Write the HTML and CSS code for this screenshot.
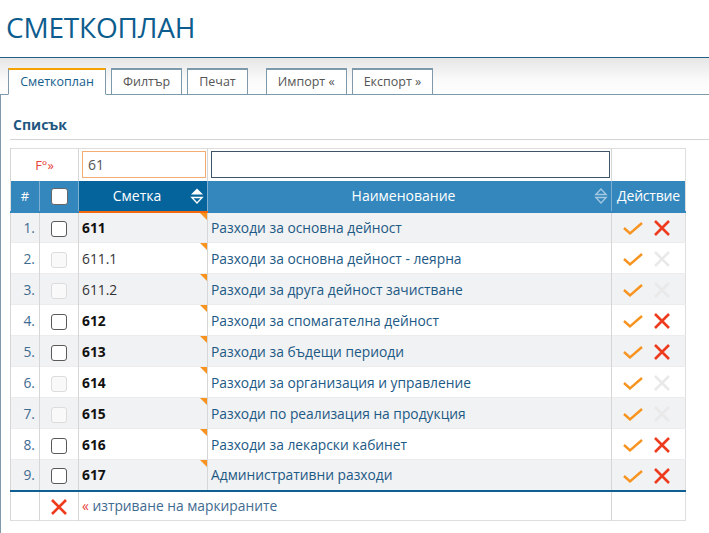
FILE: index.html
```html
<!DOCTYPE html>
<html lang="bg">
<head>
<meta charset="utf-8">
<title>Сметкоплан</title>
<link rel="stylesheet" href="styles.css">
</head>
<body>
<h1 class="title">СМЕТКОПЛАН</h1>
<div class="tabbar">
  <div class="tab active">Сметкоплан</div>
  <div class="tab">Филтър</div>
  <div class="tab">Печат</div>
  <div class="tab tab-sep">Импорт «</div>
  <div class="tab">Експорт »</div>
</div>
<div class="panel">
  <div class="section-title">Списък</div>
  <table class="grid">
    <colgroup>
      <col class="c-num"><col class="c-chk"><col class="c-acc"><col class="c-name"><col class="c-act">
    </colgroup>
    <thead>
      <tr class="filter-row">
        <td colspan="2" class="f-label">F°»</td>
        <td class="f-cell"><div class="f-input f-orange">61</div></td>
        <td class="f-cell"><div class="f-input f-dark"></div></td>
        <td></td>
      </tr>
      <tr class="head-row">
        <th class="h-num">#</th>
        <th class="h-chk"><span class="cb cb-head"></span></th>
        <th class="h-acc sorted">Сметка<svg class="sort" viewBox="0 0 14 18" width="14" height="18"><path d="M1 7.5 L7 1.5 L13 7.5 Z" fill="#fff"/><path d="M1.8 10.5 L12.2 10.5 L7 16 Z" fill="none" stroke="#fff" stroke-width="1.3"/></svg></th>
        <th class="h-name">Наименование<svg class="sort dim" viewBox="0 0 14 18" width="14" height="18"><path d="M1.8 7.5 L7 2 L12.2 7.5 Z" fill="none" stroke="#fff" stroke-width="1.3"/><path d="M1.8 10.5 L12.2 10.5 L7 16 Z" fill="none" stroke="#fff" stroke-width="1.3"/></svg></th>
        <th class="h-act">Действие</th>
      </tr>
    </thead>
    <tbody>
      <tr><td class="num">1.</td><td class="chk"><span class="cb"></span></td><td class="acc b">611<i class="corner"></i></td><td class="name">Разходи за основна дейност</td><td class="act"><svg class="ok" viewBox="0 0 22 16" width="22" height="16"><path d="M2 8 L8 13.5 L20 3" fill="none" stroke="#f7931e" stroke-width="2.4"/></svg><svg class="del" viewBox="0 0 18 18" width="18" height="18"><path d="M2 2 L16 16 M16 2 L2 16" stroke="#ee3b1d" stroke-width="2.6"/></svg></td></tr>
      <tr><td class="num">2.</td><td class="chk"><span class="cb off"></span></td><td class="acc">611.1<i class="corner"></i></td><td class="name">Разходи за основна дейност - леярна</td><td class="act"><svg class="ok" viewBox="0 0 22 16" width="22" height="16"><path d="M2 8 L8 13.5 L20 3" fill="none" stroke="#f7931e" stroke-width="2.4"/></svg><svg class="del" viewBox="0 0 18 18" width="18" height="18"><path d="M2 2 L16 16 M16 2 L2 16" stroke="#e9e9e9" stroke-width="2.6"/></svg></td></tr>
      <tr><td class="num">3.</td><td class="chk"><span class="cb off"></span></td><td class="acc">611.2<i class="corner"></i></td><td class="name">Разходи за друга дейност зачистване</td><td class="act"><svg class="ok" viewBox="0 0 22 16" width="22" height="16"><path d="M2 8 L8 13.5 L20 3" fill="none" stroke="#f7931e" stroke-width="2.4"/></svg><svg class="del" viewBox="0 0 18 18" width="18" height="18"><path d="M2 2 L16 16 M16 2 L2 16" stroke="#e9e9e9" stroke-width="2.6"/></svg></td></tr>
      <tr><td class="num">4.</td><td class="chk"><span class="cb"></span></td><td class="acc b">612<i class="corner"></i></td><td class="name">Разходи за спомагателна дейност</td><td class="act"><svg class="ok" viewBox="0 0 22 16" width="22" height="16"><path d="M2 8 L8 13.5 L20 3" fill="none" stroke="#f7931e" stroke-width="2.4"/></svg><svg class="del" viewBox="0 0 18 18" width="18" height="18"><path d="M2 2 L16 16 M16 2 L2 16" stroke="#ee3b1d" stroke-width="2.6"/></svg></td></tr>
      <tr><td class="num">5.</td><td class="chk"><span class="cb"></span></td><td class="acc b">613<i class="corner"></i></td><td class="name">Разходи за бъдещи периоди</td><td class="act"><svg class="ok" viewBox="0 0 22 16" width="22" height="16"><path d="M2 8 L8 13.5 L20 3" fill="none" stroke="#f7931e" stroke-width="2.4"/></svg><svg class="del" viewBox="0 0 18 18" width="18" height="18"><path d="M2 2 L16 16 M16 2 L2 16" stroke="#ee3b1d" stroke-width="2.6"/></svg></td></tr>
      <tr><td class="num">6.</td><td class="chk"><span class="cb off"></span></td><td class="acc b">614<i class="corner"></i></td><td class="name">Разходи за организация и управление</td><td class="act"><svg class="ok" viewBox="0 0 22 16" width="22" height="16"><path d="M2 8 L8 13.5 L20 3" fill="none" stroke="#f7931e" stroke-width="2.4"/></svg><svg class="del" viewBox="0 0 18 18" width="18" height="18"><path d="M2 2 L16 16 M16 2 L2 16" stroke="#e9e9e9" stroke-width="2.6"/></svg></td></tr>
      <tr><td class="num">7.</td><td class="chk"><span class="cb off"></span></td><td class="acc b">615<i class="corner"></i></td><td class="name">Разходи по реализация на продукция</td><td class="act"><svg class="ok" viewBox="0 0 22 16" width="22" height="16"><path d="M2 8 L8 13.5 L20 3" fill="none" stroke="#f7931e" stroke-width="2.4"/></svg><svg class="del" viewBox="0 0 18 18" width="18" height="18"><path d="M2 2 L16 16 M16 2 L2 16" stroke="#e9e9e9" stroke-width="2.6"/></svg></td></tr>
      <tr><td class="num">8.</td><td class="chk"><span class="cb"></span></td><td class="acc b">616<i class="corner"></i></td><td class="name">Разходи за лекарски кабинет</td><td class="act"><svg class="ok" viewBox="0 0 22 16" width="22" height="16"><path d="M2 8 L8 13.5 L20 3" fill="none" stroke="#f7931e" stroke-width="2.4"/></svg><svg class="del" viewBox="0 0 18 18" width="18" height="18"><path d="M2 2 L16 16 M16 2 L2 16" stroke="#ee3b1d" stroke-width="2.6"/></svg></td></tr>
      <tr><td class="num">9.</td><td class="chk"><span class="cb"></span></td><td class="acc b">617<i class="corner"></i></td><td class="name">Административни разходи</td><td class="act"><svg class="ok" viewBox="0 0 22 16" width="22" height="16"><path d="M2 8 L8 13.5 L20 3" fill="none" stroke="#f7931e" stroke-width="2.4"/></svg><svg class="del" viewBox="0 0 18 18" width="18" height="18"><path d="M2 2 L16 16 M16 2 L2 16" stroke="#ee3b1d" stroke-width="2.6"/></svg></td></tr>
    </tbody>
    <tfoot>
      <tr class="foot-row">
        <td></td>
        <td class="chk"><svg class="del" viewBox="0 0 18 18" width="18" height="18"><path d="M2 2 L16 16 M16 2 L2 16" stroke="#ee3b1d" stroke-width="2.6"/></svg></td>
        <td colspan="2" class="foot-text"><span class="laquo">«</span> изтриване на маркираните</td>
        <td></td>
      </tr>
    </tfoot>
  </table>
</div>
</body>
</html>
```

FILE: styles.css
```css
* { box-sizing: border-box; }
html, body { margin: 0; padding: 0; background: #fff; }
body {
  font-family: "Open Sans", "DejaVu Sans", sans-serif;
  font-size: 14px;
  color: #333;
  width: 709px;
  height: 533px;
  overflow: hidden;
}
.title {
  margin: 0;
  height: 57px;
  padding: 7px 0 0 6px;
  font-size: 28px;
  font-weight: normal;
  color: #0d5c8e;
  line-height: 40px;
  letter-spacing: -0.2px;
}
.tabbar {
  display: flex;
  gap: 5px;
  padding: 10px 0 0 8px;
  border-top: 1px solid #245f86;
  background: linear-gradient(#e6e6e6, #fafafa 22px, #fff 36px);
  border-bottom: 1px solid #7e99a9;
  height: 38px;
  align-items: flex-end;
}
.tab {
  height: 27px;
  margin-bottom: -1px;
  padding: 0 11px;
  border: 1px solid #7e99a9;
  border-top-width: 2px;
  background: #fff;
  color: #555;
  font-size: 12.5px;
  line-height: 24px;
}
.tab.active {
  border-top-color: #f5a300;
  border-bottom-color: #fff;
  color: #155e8d;
  padding: 0 11px;
  width: 98px;
  text-align: center;
}
.tab-sep { margin-left: 13px; }
.panel {
  border-left: 1px solid #7e99a9;
  padding: 20px 0 0 9px;
  height: 438px;
}
.section-title {
  font-weight: bold;
  font-size: 14px;
  color: #1f5781;
  padding: 0 0 0 3px;
  line-height: 20px;
  height: 25px;
  border-bottom: 1px solid #d4d4d4;
  margin-bottom: 8px;
}
.grid {
  border-collapse: collapse;
  width: 675px;
  table-layout: fixed;
  border: 1px solid #dedede;
  font-size: 13.8px;
}
.c-num { width: 29px; }
.c-chk { width: 39px; }
.c-acc { width: 129px; }
.c-name { width: 404px; }
.c-act { width: 74px; }
.grid td, .grid th { padding: 0; border-left: 1px solid #d6d6d6; }
.filter-row td { height: 32px; background: #fff; border-bottom: 0; }
.f-label { text-align: center; color: #e8413a; font-size: 13px; }
.f-cell { padding: 0 1px 0 3px !important; }
.f-input {
  height: 27px;
  border: 1px solid #3f5466;
  background: #fff;
  line-height: 25px;
  padding-left: 5px;
  color: #555;
  font-size: 14px;
}
.f-orange { border-color: #f4ac75; }
.head-row th {
  height: 31px;
  background: #3387bd;
  color: #fff;
  font-weight: normal;
  font-size: 14px;
  border-left: 1px solid #7fb0d3;
  border-bottom: 2px solid #3387bd;
  position: relative;
}
.head-row th:first-child { border-left: 1px solid #dedede; }
.head-row .sorted { background: #05649c; border-bottom-color: #f2680a; }
.h-num { font-size: 13px !important; }
.h-acc, .h-name { padding-right: 18px !important; padding-left: 6px !important; }
.h-act { letter-spacing: -0.2px; }
.sort { position: absolute; right: 3px; top: 6px; }
.sort.dim { opacity: 0.55; }
.cb {
  display: inline-block;
  width: 16px;
  height: 16px;
  border: 1px solid #5a5a5a;
  border-radius: 3px;
  background: #fff;
  vertical-align: middle;
}
.cb.off { border-color: #dcdcdc; background: #f9f9f9; }
.cb-head { border-color: #666; width: 17px; height: 17px; }
.grid tbody td {
  height: 31px;
  border-top: 1px solid #ececec;
  vertical-align: middle;
}
.grid tbody tr:nth-child(odd) td { background: #f1f2f3; }
.grid tbody tr:nth-child(even) td { background: #fff; }
.num { text-align: right; padding-right: 4px !important; color: #3f6b90; }
.chk { text-align: center; }
.acc { position: relative; padding-left: 3px !important; color: #333; }
.acc.b { font-weight: bold; color: #111; }
.corner {
  position: absolute;
  right: 0;
  top: 0;
  width: 0;
  height: 0;
  border-top: 7px solid #f7931e;
  border-left: 7px solid transparent;
}
.name { padding-left: 3px !important; color: #1d5985; white-space: nowrap; }
.act { padding-left: 10px !important; white-space: nowrap; }
.act svg { vertical-align: middle; }
.act .del { margin-left: 9px; }
.foot-row td {
  height: 30px;
  border-top: 2px solid #105f94;
  background: #fff;
  vertical-align: middle;
}
.foot-row .del { vertical-align: middle; }
.foot-text { padding-left: 3px !important; color: #3f6b90; }
.laquo { color: #e8413a; }
```
